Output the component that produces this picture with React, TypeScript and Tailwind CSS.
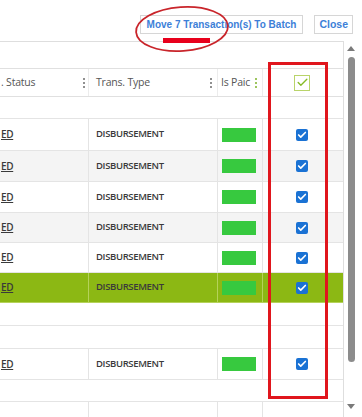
import { Check } from 'lucide-react';

type RowKind = 'data' | 'blank' | 'cols';

const ROWS: { h: string; kind: RowKind; bg: string }[] = [
  { h: 'h-[22px]', kind: 'blank', bg: 'bg-white' },
  { h: 'h-[32px]', kind: 'data', bg: 'bg-white' },
  { h: 'h-[31px]', kind: 'data', bg: 'bg-[#f4f4f4]' },
  { h: 'h-[31px]', kind: 'data', bg: 'bg-white' },
  { h: 'h-[30px]', kind: 'data', bg: 'bg-[#f4f4f4]' },
  { h: 'h-[30px]', kind: 'data', bg: 'bg-white' },
  { h: 'h-[30px]', kind: 'data', bg: 'bg-[#8cb814]' },
  { h: 'h-[23px]', kind: 'blank', bg: 'bg-white' },
  { h: 'h-[23px]', kind: 'blank', bg: 'bg-white' },
  { h: 'h-[31px]', kind: 'data', bg: 'bg-white' },
  { h: 'h-[22px]', kind: 'blank', bg: 'bg-white' },
  { h: 'h-[30px]', kind: 'cols', bg: 'bg-white' },
];

function Dots({ green }: { green?: boolean }) {
  const c = green ? 'bg-[#7cb32a]' : 'bg-[#6b6b6b]';
  return (
    <div className="flex flex-col gap-[2px]">
      <span className={`w-[2px] h-[2px] rounded-full ${c}`} />
      <span className={`w-[2px] h-[2px] rounded-full ${c}`} />
      <span className={`w-[2px] h-[2px] rounded-full ${c}`} />
    </div>
  );
}

function BlueCheck() {
  return (
    <div className="w-[12px] h-[12px] rounded-[2px] bg-[#1a72d4] flex items-center justify-center">
      <Check size={10} strokeWidth={4} className="text-white" />
    </div>
  );
}

function GridRow({ h, kind, bg }: { h: string; kind: RowKind; bg: string }) {
  const green = bg === 'bg-[#8cb814]';
  const line = green ? 'border-[#b5d25a]' : 'border-[#e4e4e4]';
  if (kind === 'blank') {
    return <div className={`${h} ${bg} border-b ${line}`} />;
  }
  const isData = kind === 'data';
  return (
    <div className={`${h} ${bg} border-b ${line} flex text-[9.5px] font-semibold text-[#3a3a3a] tracking-[-0.35px]`}>
      <div className={`w-[89px] border-r ${line} flex items-center pl-[1px]`}>
        {isData && <span className="underline text-[10px]">ED</span>}
      </div>
      <div className={`w-[129px] border-r ${line} flex items-center pl-[7px]`}>
        {isData && 'DISBURSEMENT'}
      </div>
      <div className={`w-[45px] border-r ${line} flex items-center pl-[4px]`}>
        {isData && <div className="w-[34px] h-[14px] bg-[#37c93f]" />}
      </div>
      <div className="flex-1 flex items-center justify-center pr-[2px]">
        {isData && <BlueCheck />}
      </div>
    </div>
  );
}

export default function App() {
  return (
    <div className="relative w-[362px] h-[417px] overflow-hidden bg-white font-['Open_Sans',sans-serif]">
      <div className="h-[41px] flex justify-end items-start pt-[15px] pr-[9px] gap-[11px] font-['Liberation_Sans',sans-serif]">
        <button className="h-[19px] px-[6px] border border-[#d6d6d6] bg-white text-[10px] font-bold text-[#3d7fd8]">
          Move 7 Transaction(s) To Batch
        </button>
        <button className="h-[19px] px-[4px] border border-[#d6d6d6] bg-white text-[10.5px] font-bold text-[#3d7fd8]">
          Close
        </button>
      </div>

      <div className="flex h-[376px]">
        <div className="w-[344px] border-t border-r border-[#dedede]">
          <div className="h-[26px]" />
          <div className="h-[29px] border-t border-b border-[#e0e0e0] flex text-[10.5px] text-[#555] tracking-[-0.2px]">
            <div className="w-[89px] border-r border-[#ececec] flex items-center justify-between pl-[1px] pr-[3px]">
              <span>. Status</span>
              <Dots />
            </div>
            <div className="w-[129px] border-r border-[#ececec] flex items-center justify-between pl-[7px] pr-[5px]">
              <span>Trans. Type</span>
              <Dots />
            </div>
            <div className="w-[45px] border-r border-[#ececec] flex items-center justify-between pl-[3px] pr-[5px] overflow-hidden">
              <span className="whitespace-nowrap">Is Paic</span>
              <Dots green />
            </div>
            <div className="flex-1 flex items-center justify-center pr-[2px]">
              <div className="w-[16px] h-[16px] border-[1.5px] border-[#b9d46a] flex items-center justify-center">
                <Check size={13} strokeWidth={2.5} className="text-[#86bb27]" />
              </div>
            </div>
          </div>
          {ROWS.map((r, i) => (
            <GridRow key={i} h={r.h} kind={r.kind} bg={r.bg} />
          ))}
        </div>

        <div className="flex-1 flex flex-col items-center pt-[5px] pr-[4px]">
          <div className="w-0 h-0 border-l-[4px] border-r-[4px] border-b-[5px] border-l-transparent border-r-transparent border-b-[#7a7a7a]" />
          <div className="mt-[6px] w-[7px] h-[305px] rounded-full bg-[#8c8c8c]" />
          <div className="mt-[42px] w-0 h-0 border-l-[4px] border-r-[4px] border-t-[5px] border-l-transparent border-r-transparent border-t-[#7a7a7a]" />
        </div>
      </div>

      {/* annotations over the screenshot */}
      <svg className="absolute left-[134px] top-[4px] pointer-events-none" width="100" height="52" viewBox="0 0 100 52">
        <ellipse cx="48" cy="25" rx="46" ry="22" transform="rotate(-4 48 25)" fill="none" stroke="#c9252b" strokeWidth="1.8" />
      </svg>
      <div className="absolute left-[163px] top-[38px] w-[47px] h-[5px] bg-[#e8001c]" />
      <div className="absolute left-[268px] top-[62px] w-[60px] h-[337px] border-[3px] border-[#e0161d]" />
    </div>
  );
}
